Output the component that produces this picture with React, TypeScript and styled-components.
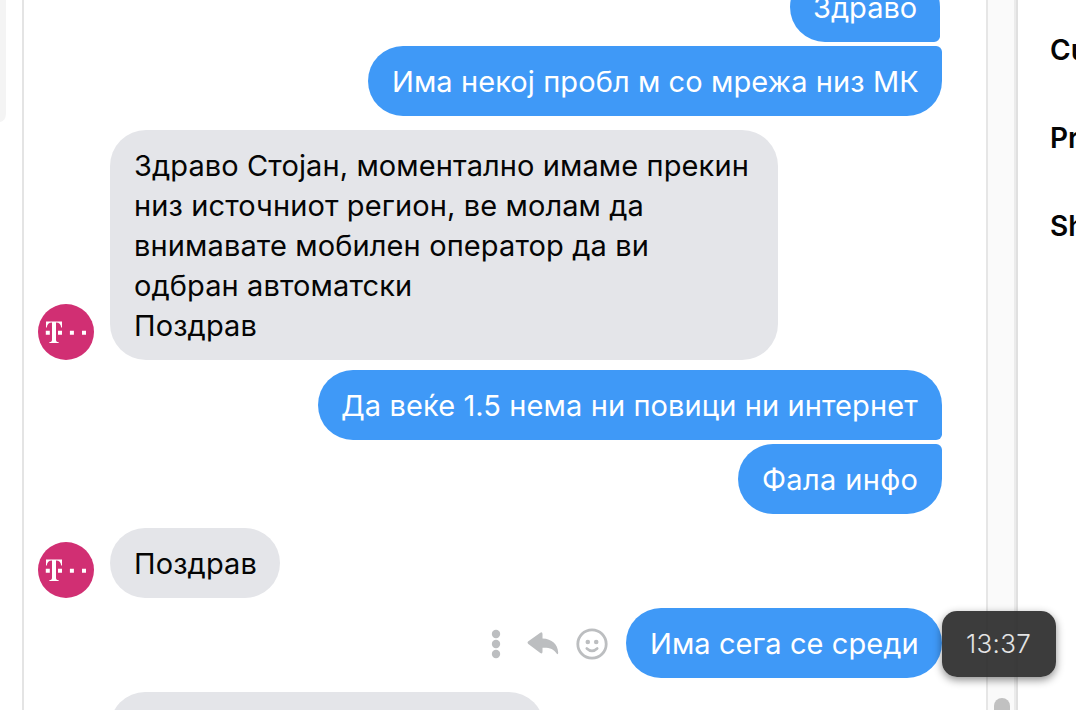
import React from "react";
import styled, { createGlobalStyle } from "styled-components";

const GlobalStyle = createGlobalStyle`
  * { box-sizing: border-box; }
  html, body { margin: 0; padding: 0; background: #fff; overflow: hidden; }
`;

const Page = styled.div`
  display: flex;
  width: 1076px;
  height: 710px;
  overflow: hidden;
  background: #fff;
  font-family: Inter, "Noto Sans", sans-serif;
  font-size: 29px;
  line-height: 40px;
  color: #050505;
`;

const ConversationList = styled.aside`
  flex: none;
  width: 24px;
  border-right: 2px solid #e4e4e4;
`;

const SelectedConversation = styled.div`
  width: 6px;
  height: 122px;
  background: #f4f4f4;
  border-bottom-right-radius: 10px 14px;
`;

const Thread = styled.main`
  flex: none;
  display: flex;
  flex-direction: column;
  width: 962px;
  height: 790px;
  margin-top: -28px;
  padding: 0 44px 0 14px;
`;

const Row = styled.div<{ $own?: boolean; $gap: number; $inset?: number }>`
  flex: none;
  display: flex;
  align-items: flex-end;
  justify-content: ${(p) => (p.$own ? "flex-end" : "flex-start")};
  gap: 16px;
  margin-bottom: ${(p) => p.$gap}px;
  margin-right: ${(p) => p.$inset ?? 0}px;
`;

const Bubble = styled.div<{ $own?: boolean; $width: number; $shape?: "first" | "last"; $indent?: number; $pad?: number }>`
  flex: none;
  width: ${(p) => p.$width}px;
  min-height: 70px;
  padding: 16px 0 14px ${(p) => p.$pad ?? 24}px;
  white-space: nowrap;
  color: ${(p) => (p.$own ? "#fff" : "#050505")};
  background: ${(p) => (p.$own ? "#3f99f7" : "#e4e5e9")};
  border-radius: 36px;
  ${(p) => p.$shape === "first" && "border-bottom-right-radius: 6px;"}
  ${(p) => p.$shape === "last" && "border-top-right-radius: 6px;"}
  margin-left: ${(p) => p.$indent ?? 0}px;
`;

const Line = styled.div<{ $tracking?: number }>`
  letter-spacing: ${(p) => p.$tracking ?? 0}px;
`;

const Avatar = styled.svg`
  flex: none;
  display: block;
  width: 56px;
  height: 56px;
`;

const Actions = styled.div`
  display: flex;
  align-items: center;
  height: 70px;
  padding-top: 2px;
  margin-right: 2px;
`;

const ActionIcon = styled.svg<{ $w: number; $after?: number }>`
  display: block;
  width: ${(p) => p.$w}px;
  height: 32px;
  margin-right: ${(p) => p.$after ?? 0}px;
  fill: #bcbec0;
`;

const OwnMessage = styled.div`
  position: relative;
`;

const TimeTooltip = styled.div`
  position: absolute;
  left: 100%;
  top: 3px;
  display: flex;
  align-items: center;
  width: 114px;
  height: 66px;
  padding-left: 24px;
  border-radius: 15px;
  background: rgba(43, 43, 43, 0.92);
  box-shadow: 0 3px 8px rgba(0, 0, 0, 0.45);
  color: #e4e4e4;
  font-size: 26px;
  font-weight: 300;
  letter-spacing: 0.3px;
`;

const ScrollTrack = styled.div`
  flex: none;
  display: flex;
  align-items: flex-end;
  justify-content: center;
  width: 32px;
  border-left: 2px solid #e6e6e6;
  border-right: 2px solid #e0e0e0;
  background: linear-gradient(to right, #fafafa 26px, #ebebeb 26px);
`;

const ScrollThumb = styled.div`
  width: 16px;
  height: 12px;
  border-radius: 8px 8px 0 0;
  background: #c1c1c1;
`;

const Details = styled.aside`
  flex: 1;
  overflow: hidden;
  padding: 30px 0 0 32px;
`;

const Section = styled.h2`
  margin: 0 0 48px;
  font-size: 28px;
  font-weight: 600;
  line-height: 40px;
  white-space: nowrap;
`;

const TelekomAvatar = () => (
  <Avatar viewBox="0 0 56 56">
    <circle cx="28" cy="28" r="28" fill="#d12f73" />
    <path
      d="M8 17.5H24V23.4H23.2C22.7 20.2 21.3 18.7 18 18.6V35.4C18 37.4 18.6 38 20.6 38.1V39.1H11.4V38.1C13.4 38 14 37.4 14 35.4V18.6C10.7 18.7 9.3 20.2 8.8 23.4H8Z"
      fill="#fff"
    />
    <path d="M7.8 26.8h4v4h-4zM20 26.8h4v4h-4zM31.9 26.8h4v4h-4zM44 26.8h4v4h-4z" fill="#fff" />
  </Avatar>
);

export default function App() {
  return (
    <>
      <GlobalStyle />
      <Page>
        <ConversationList>
          <SelectedConversation />
        </ConversationList>
        <Thread>
          <Row $own $gap={4} $inset={2}>
            <Bubble $own $width={150} $pad={23} $shape="first"><Line>Здраво</Line></Bubble>
          </Row>
          <Row $own $gap={14}>
            <Bubble $own $width={574} $shape="last"><Line $tracking={0.09}>Има некој пробл м со мрежа низ МК</Line></Bubble>
          </Row>
          <Row $gap={10}>
            <TelekomAvatar />
            <Bubble $width={668}>
              <Line $tracking={0.1}>Здраво Стојан, моментално имаме прекин</Line>
              <Line $tracking={0.11}>низ источниот регион, ве молам да</Line>
              <Line $tracking={0.12}>внимавате мобилен оператор да ви</Line>
              <Line $tracking={0.1}>одбран автоматски</Line>
              <Line $tracking={0.1}>Поздрав</Line>
            </Bubble>
          </Row>
          <Row $own $gap={4}>
            <Bubble $own $width={624} $pad={23} $shape="first"><Line $tracking={0.1}>Да веќе 1.5 нема ни повици ни интернет</Line></Bubble>
          </Row>
          <Row $own $gap={14}>
            <Bubble $own $width={204} $shape="last"><Line $tracking={0.35}>Фала инфо</Line></Bubble>
          </Row>
          <Row $gap={10}>
            <TelekomAvatar />
            <Bubble $width={170}><Line $tracking={0.1}>Поздрав</Line></Bubble>
          </Row>
          <Row $own $gap={14}>
            <Actions>
              <ActionIcon $w={10} $after={26} viewBox="0 0 10 32">
                <circle cx="5" cy="6" r="4.2" />
                <circle cx="5" cy="16" r="4.2" />
                <circle cx="5" cy="26" r="4.2" />
              </ActionIcon>
              <ActionIcon $w={32} $after={17} viewBox="0 0 32 32">
                <path d="M1 13.6Q0 14.7 1 15.8L13.3 25Q15.5 26.2 15.5 23.8V19.8C22 19.4 27 21 29.6 25.6Q31.2 27.2 31.2 24.5C30.7 16 25 10.8 15.5 10.4V6Q15.4 3.6 13.3 4.7Z" />
              </ActionIcon>
              <ActionIcon $w={32} viewBox="0 0 32 32">
                <circle cx="16" cy="16" r="14.2" fill="none" stroke="#bcbec0" strokeWidth="2.8" />
                <circle cx="11.8" cy="14" r="2.3" />
                <circle cx="20.2" cy="14" r="2.3" />
                <path d="M10.8 20.5Q16 25.4 21.2 20.5" fill="none" stroke="#bcbec0" strokeWidth="2.6" strokeLinecap="round" />
              </ActionIcon>
            </Actions>
            <OwnMessage>
              <Bubble $own $width={316}><Line $tracking={0.08}>Има сега се среди</Line></Bubble>
              <TimeTooltip>13:37</TimeTooltip>
            </OwnMessage>
          </Row>
          <Row $gap={0}>
            <Bubble $width={434} $indent={72} />
          </Row>
        </Thread>
        <ScrollTrack>
          <ScrollThumb />
        </ScrollTrack>
        <Details>
          <Section>Customize chat</Section>
          <Section>Privacy &amp; support</Section>
          <Section>Shared media</Section>
        </Details>
      </Page>
    </>
  );
}
